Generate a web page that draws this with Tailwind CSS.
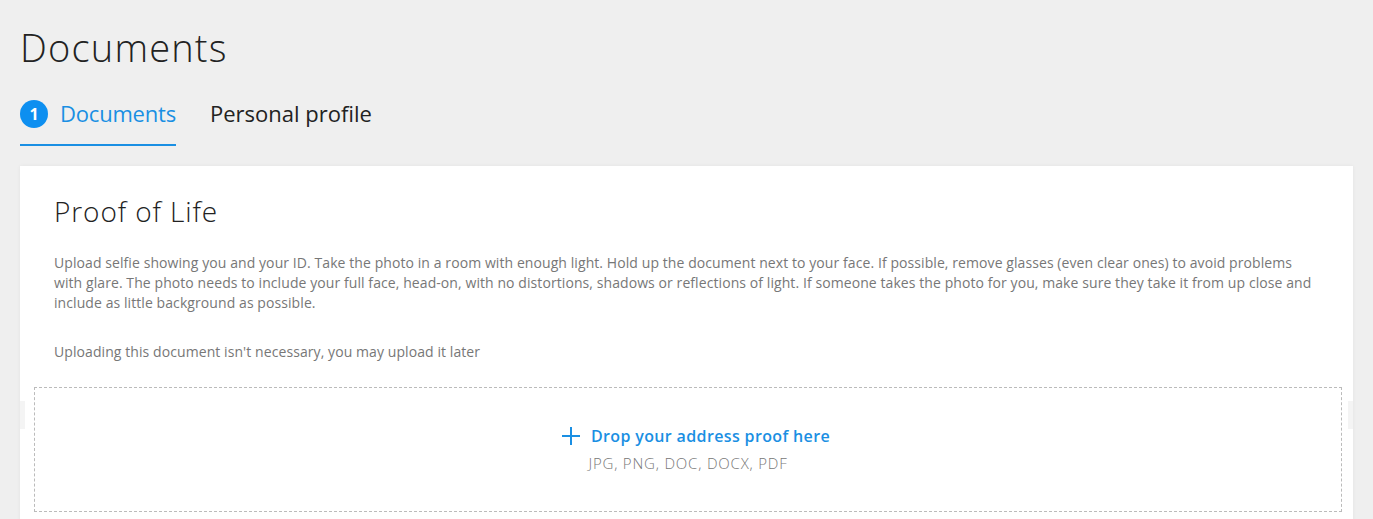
<!DOCTYPE html>
<html lang="en">
  <head>
    <meta charset="UTF-8" />
    <title>Documents</title>
    <script src="https://cdn.jsdelivr.net/npm/@tailwindcss/browser@4"></script>
  </head>
  <body class="bg-[#efefef] h-[519px] overflow-hidden font-['Open_Sans','Noto_Sans',sans-serif]">
    <div class="px-5">
      <h1 class="pt-[23px] h-[96px] text-[38px] leading-[48px] tracking-[1.2px] font-light text-[#222]">Documents</h1>
      <!-- tabs -->
      <div class="flex gap-[34px] h-[50px]">
        <div class="flex items-start gap-3 border-b-2 border-[#1a8fe3] h-[50px]">
          <span class="w-7 h-7 mt-1 rounded-full bg-[#0d8ff0] text-white text-[16px] font-bold flex items-center justify-center">1</span>
          <span class="text-[22px] leading-[34px] tracking-[-0.2px] text-[#1a8fe3]">Documents</span>
        </div>
        <span class="text-[22px] leading-[34px] text-[#222]">Personal profile</span>
      </div>
      <!-- card -->
      <section class="relative mt-5 bg-white h-[360px] shadow-[0_0_4px_rgba(0,0,0,0.05)]">
        <div class="px-[34px] pt-[27px]">
          <h2 class="text-[28px] leading-9 tracking-[0.9px] font-light text-[#222]">Proof of Life</h2>
          <p class="mt-[24px] text-[14px] leading-5 tracking-[0.08px] text-[#777]">Upload selfie showing you and your ID. Take the photo in a room with enough light. Hold up the document next to your face. If possible, remove glasses (even clear ones) to avoid problems with glare. The photo needs to include your full face, head-on, with no distortions, shadows or reflections of light. If someone takes the photo for you, make sure they take it from up close and include as little background as possible.</p>
          <p class="mt-[29px] text-[14px] leading-5 tracking-[0.08px] text-[#777]">Uploading this document isn't necessary, you may upload it later</p>
        </div>
        <div class="absolute left-0 top-[235px] w-[5px] h-7 bg-[#f4f4f4]"></div>
        <div class="absolute right-0 top-[235px] w-[5px] h-7 bg-[#f4f4f4]"></div>
        <!-- drop zone -->
        <div class="mx-[14px] mt-[25px] w-[1308px] h-[125px] border border-dashed border-[#bbb] flex flex-col items-center pt-[36px]">
          <div class="flex items-center gap-[10px] pl-[15px]">
            <svg width="20" height="20" viewBox="0 0 20 20" fill="none" stroke="#1a8fe3" stroke-width="2"><path d="M10 1v18M1 10h18" /></svg>
            <span class="text-[16px] leading-6 tracking-[0.36px] font-semibold text-[#1a8fe3]">Drop your address proof here</span>
          </div>
          <span class="mt-[5px] text-[15px] leading-5 tracking-[0.8px] font-light text-[#777]">JPG, PNG, DOC, DOCX, PDF</span>
        </div>
      </section>
    </div>
  </body>
</html>
